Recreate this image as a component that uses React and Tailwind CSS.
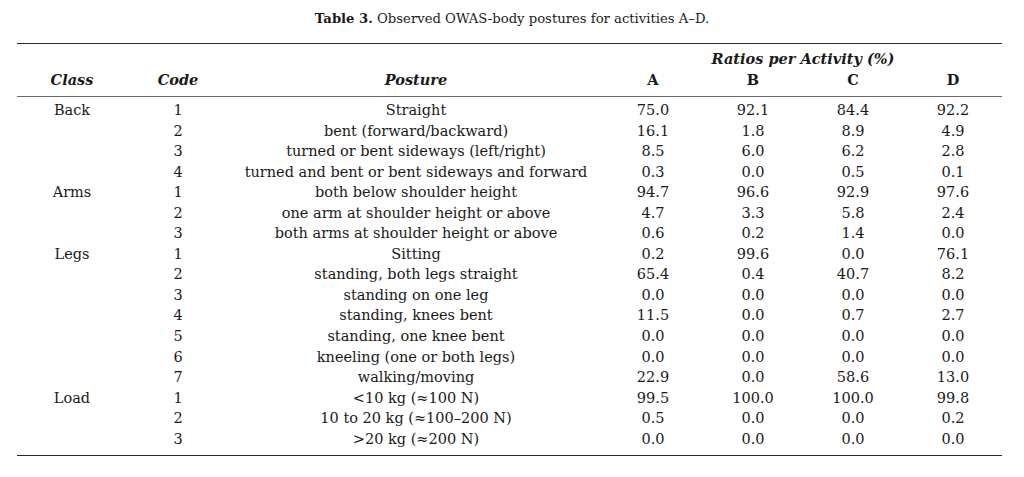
const rows = [
  ["Back", "1", "Straight", "75.0", "92.1", "84.4", "92.2"],
  ["", "2", "bent (forward/backward)", "16.1", "1.8", "8.9", "4.9"],
  ["", "3", "turned or bent sideways (left/right)", "8.5", "6.0", "6.2", "2.8"],
  ["", "4", "turned and bent or bent sideways and forward", "0.3", "0.0", "0.5", "0.1"],
  ["Arms", "1", "both below shoulder height", "94.7", "96.6", "92.9", "97.6"],
  ["", "2", "one arm at shoulder height or above", "4.7", "3.3", "5.8", "2.4"],
  ["", "3", "both arms at shoulder height or above", "0.6", "0.2", "1.4", "0.0"],
  ["Legs", "1", "Sitting", "0.2", "99.6", "0.0", "76.1"],
  ["", "2", "standing, both legs straight", "65.4", "0.4", "40.7", "8.2"],
  ["", "3", "standing on one leg", "0.0", "0.0", "0.0", "0.0"],
  ["", "4", "standing, knees bent", "11.5", "0.0", "0.7", "2.7"],
  ["", "5", "standing, one knee bent", "0.0", "0.0", "0.0", "0.0"],
  ["", "6", "kneeling (one or both legs)", "0.0", "0.0", "0.0", "0.0"],
  ["", "7", "walking/moving", "22.9", "0.0", "58.6", "13.0"],
  ["Load", "1", "<10 kg (≈100 N)", "99.5", "100.0", "100.0", "99.8"],
  ["", "2", "10 to 20 kg (≈100–200 N)", "0.5", "0.0", "0.0", "0.2"],
  ["", "3", ">20 kg (≈200 N)", "0.0", "0.0", "0.0", "0.0"],
];

const grid = "grid grid-cols-[110px_102px_374px_100px_100px_100px_100px] text-center";

export default function App() {
  return (
    <div className="w-[1024px] h-[477px] bg-white text-[#1a1a1a] font-['DejaVu_Serif',serif] overflow-hidden">
      <div className="pt-[10px] h-[43px] text-center text-[13.2px] leading-[18px]">
        <span className="font-bold">Table 3.</span> Observed OWAS-body postures for activities A–D.
      </div>
      <div className="mx-[17px] w-[985px] border-t-[1.5px] border-b-[1.5px] border-[#2a2a2a] text-[14.5px]">
        <div className="pt-[5px] pb-[6px] border-b border-[#6a6a6a]">
          <div className={grid + " leading-[20.5px]"}>
            <div className="col-start-4 col-span-4 font-bold italic">Ratios per Activity (%)</div>
          </div>
          <div className={grid + " leading-[20.5px] font-bold"}>
            <div className="italic">Class</div>
            <div className="italic">Code</div>
            <div className="italic">Posture</div>
            <div>A</div>
            <div>B</div>
            <div>C</div>
            <div>D</div>
          </div>
        </div>
        <div className="pt-[3px] pb-[6px]">
          {rows.map((r, i) => (
            <div key={i} className={grid + " h-[20.56px] leading-[20.56px] whitespace-nowrap"}>
              {r.map((c, j) => (
                <div key={j}>{c}</div>
              ))}
            </div>
          ))}
        </div>
      </div>
    </div>
  );
}
